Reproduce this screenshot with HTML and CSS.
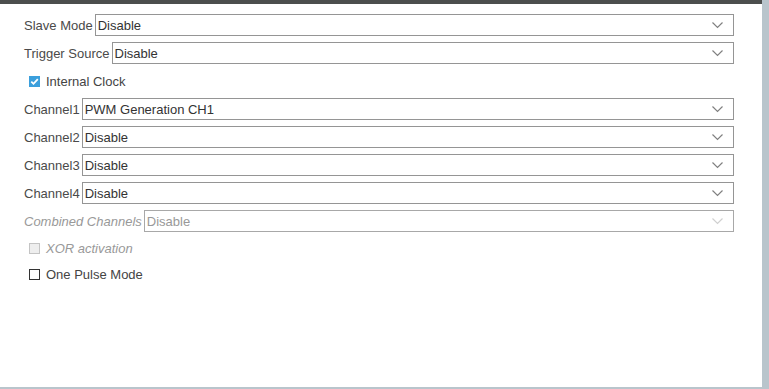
FILE: index.html
```html
<!doctype html>
<html lang="en">
<head>
  <meta charset="UTF-8">
  <title>Timer Mode</title>
  <link rel="stylesheet" href="styles.css">
</head>
<body>
  <div class="frame">
    <div class="panel">
      <div class="row">
        <span class="label">Slave Mode</span>
        <div class="select"><span class="value">Disable</span><svg class="chev" width="11" height="7" viewBox="0 0 11 7"><path d="M0.5 0.5 L5.5 5.5 L10.5 0.5" fill="none" stroke="currentColor" stroke-width="1.2"/></svg></div>
      </div>
      <div class="row">
        <span class="label">Trigger Source</span>
        <div class="select"><span class="value">Disable</span><svg class="chev" width="11" height="7" viewBox="0 0 11 7"><path d="M0.5 0.5 L5.5 5.5 L10.5 0.5" fill="none" stroke="currentColor" stroke-width="1.2"/></svg></div>
      </div>
      <div class="row check-row">
        <span class="box checked"><svg width="11" height="11" viewBox="0 0 11 11"><path d="M2.3 5.6 L4.5 7.8 L8.8 3.2" fill="none" stroke="#fff" stroke-width="1.8"/></svg></span>
        <span class="check-label">Internal Clock</span>
      </div>
      <div class="row">
        <span class="label">Channel1</span>
        <div class="select"><span class="value">PWM Generation CH1</span><svg class="chev" width="11" height="7" viewBox="0 0 11 7"><path d="M0.5 0.5 L5.5 5.5 L10.5 0.5" fill="none" stroke="currentColor" stroke-width="1.2"/></svg></div>
      </div>
      <div class="row">
        <span class="label">Channel2</span>
        <div class="select"><span class="value">Disable</span><svg class="chev" width="11" height="7" viewBox="0 0 11 7"><path d="M0.5 0.5 L5.5 5.5 L10.5 0.5" fill="none" stroke="currentColor" stroke-width="1.2"/></svg></div>
      </div>
      <div class="row">
        <span class="label">Channel3</span>
        <div class="select"><span class="value">Disable</span><svg class="chev" width="11" height="7" viewBox="0 0 11 7"><path d="M0.5 0.5 L5.5 5.5 L10.5 0.5" fill="none" stroke="currentColor" stroke-width="1.2"/></svg></div>
      </div>
      <div class="row">
        <span class="label">Channel4</span>
        <div class="select"><span class="value">Disable</span><svg class="chev" width="11" height="7" viewBox="0 0 11 7"><path d="M0.5 0.5 L5.5 5.5 L10.5 0.5" fill="none" stroke="currentColor" stroke-width="1.2"/></svg></div>
      </div>
      <div class="row disabled">
        <span class="label">Combined Channels</span>
        <div class="select"><span class="value">Disable</span><svg class="chev" width="11" height="7" viewBox="0 0 11 7"><path d="M0.5 0.5 L5.5 5.5 L10.5 0.5" fill="none" stroke="currentColor" stroke-width="1.2"/></svg></div>
      </div>
      <div class="row check-row compact disabled">
        <span class="box"></span>
        <span class="check-label">XOR activation</span>
      </div>
      <div class="row check-row compact">
        <span class="box"></span>
        <span class="check-label">One Pulse Mode</span>
      </div>
    </div>
    <div class="scroll"></div>
  </div>
</body>
</html>
```
FILE: styles.css
```css
body {
  margin: 0;
  font-family: "Liberation Sans", Arial, sans-serif;
  font-size: 13px;
  color: #4a4a4a;
  background: #fff;
}

.frame {
  display: flex;
  height: 389px;
}

.panel {
  flex: 1;
  box-sizing: border-box;
  border-top: 4px solid #4c4e4d;
  border-bottom: 2px solid #b9c5cc;
  padding: 10px 28px 0 24px;
  display: flex;
  flex-direction: column;
  gap: 6px;
}

.scroll {
  width: 7px;
  background: #b9c5cc;
}

.row {
  display: flex;
  align-items: center;
  height: 22px;
}

.row.compact {
  height: 20px;
}

.label {
  white-space: nowrap;
  margin-right: 2px;
}

.select {
  flex: 1;
  box-sizing: border-box;
  height: 22px;
  border: 1px solid #959595;
  display: flex;
  align-items: center;
  padding: 0 10px 0 2px;
  color: #333;
}

.value {
  flex: 1;
}

.chev {
  color: #808080;
}

.check-row {
  padding-left: 5px;
}

.box {
  box-sizing: border-box;
  width: 11px;
  height: 11px;
  border: 1px solid #333;
  margin-right: 6px;
  display: flex;
}

.box.checked {
  border: none;
  background: #3b9fdc;
}

.check-label {
  color: #444;
}

.disabled .label,
.disabled .check-label {
  font-style: italic;
  color: #999;
}

.disabled .select {
  border-color: #a8a8a8;
  color: #999;
}

.disabled .chev {
  color: #d0d0d0;
}

.disabled .box {
  border-color: #c4c4c4;
  background: #eee;
}
```
